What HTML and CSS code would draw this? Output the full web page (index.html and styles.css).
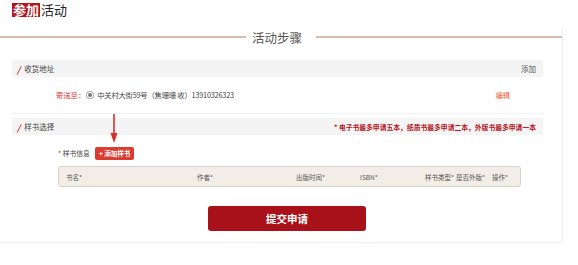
FILE: index.html
```html
<!DOCTYPE html>
<html lang="zh-CN">
<head>
    <meta charset="UTF-8">
    <title>参加活动</title>
    <link rel="stylesheet" href="styles.css">
</head>
<body>
    <div class="top">
        <span class="tag">参加</span><span class="top-text">活动</span>
    </div>

    <div class="panel">
        <div class="steps"><span>活动步骤</span></div>

        <!-- 收货地址 -->
        <div class="section">
            <div class="sec-head">
                <span class="slash">/</span>
                <span class="sec-title">收货地址</span>
                <span class="sec-right">添加</span>
            </div>
            <div class="address">
                <span class="addr-label">寄送至：</span>
                <span class="radio"></span>
                <span class="addr-text">中关村大街59号（焦珊珊 收）13910326323</span>
                <span class="edit">编辑</span>
            </div>
        </div>

        <!-- 样书选择 -->
        <div class="section books">
            <div class="sec-head">
                <span class="slash">/</span>
                <span class="sec-title">样书选择</span>
                <span class="sec-note">* 电子书最多申请五本，纸质书最多申请二本，外版书最多申请一本</span>
            </div>
            <div class="book-row">
                <span class="book-label">* 样书信息</span>
                <button class="add-btn">+ 添加样书</button>
            </div>
            <div class="table-head">
                <span class="c-name">书名*</span>
                <span class="c-author">作者*</span>
                <span class="c-date">出版时间*</span>
                <span class="c-isbn">ISBN*</span>
                <span class="c-type">样书类型*</span>
                <span class="c-foreign">是否外版*</span>
                <span class="c-op">操作*</span>
            </div>
            <svg class="arrow" width="10" height="30" viewBox="0 0 10 30">
                <line x1="5" y1="0" x2="5" y2="22" stroke="#d8312b" stroke-width="1.6"/>
                <polygon points="1.5,19 8.5,19 5,29" fill="#d8312b"/>
            </svg>
        </div>

        <div class="submit-row">
            <button class="submit">提交申请</button>
        </div>
    </div>
</body>
</html>
```

FILE: styles.css
```css
body {
    margin: 0;
    font-family: "Noto Sans CJK SC", "Noto Sans", sans-serif;
    color: #333;
    background: #fff;
}

.top {
    height: 28px;
    padding: 3px 0 0 12px;
    box-sizing: border-box;
    display: flex;
    align-items: flex-start;
}

.tag {
    background: #b5141c;
    color: #fff;
    font-size: 13px;
    line-height: 14px;
    padding: 0 1px;
    font-weight: bold;
}

.top-text {
    font-size: 13px;
    line-height: 14px;
    color: #222;
    margin-left: 1px;
}

.panel {
    width: 562px;
    height: 214px;
    border-right: 1px solid #eee;
    border-bottom: 1px solid #eee;
    box-shadow: 0 1px 2px rgba(0, 0, 0, 0.04);
}

/* title on the line */
.steps {
    display: flex;
    align-items: center;
    height: 18px;
}

.steps::before,
.steps::after {
    content: "";
    flex: 1;
    height: 2px;
    background: #d4bea9;
}

.steps span {
    padding: 0 14px;
    font-size: 12.5px;
    color: #555;
    margin-left: -8px;
}

.section {
    margin: 14px 19px 0 12px;
    position: relative;
}

.books {
    margin-top: 4px;
}

.sec-head {
    height: 17px;
    background: #f4f4f4;
    display: flex;
    align-items: center;
    padding: 0 7px 0 5px;
    font-size: 7.5px;
    color: #444;
}

.slash {
    color: #c1121c;
    font-weight: bold;
    font-style: italic;
    font-size: 8.5px;
    margin-right: 4px;
}

.sec-right {
    margin-left: auto;
    color: #555;
}

.sec-note {
    margin-left: auto;
    color: #b4151e;
    font-weight: bold;
    font-size: 6.8px;
}

.address {
    height: 36px;
    display: flex;
    align-items: center;
    padding-left: 44px;
    font-size: 7.3px;
    color: #444;
    border-bottom: 1px solid #f1f1f1;
}

.addr-label {
    color: #e4393c;
}

.radio {
    width: 4px;
    height: 4px;
    border-radius: 50%;
    background: #777;
    box-shadow: 0 0 0 1px #fff, 0 0 0 2px #aaa;
    margin: 0 5px 0 3px;
}

.addr-text {
    letter-spacing: -0.2px;
}

.edit {
    margin-left: auto;
    margin-right: 33px;
    color: #e8632d;
}

.book-row {
    display: flex;
    align-items: center;
    height: 14px;
    margin-top: 11px;
    padding-left: 46px;
    font-size: 6.8px;
    color: #444;
}

.add-btn {
    margin-left: 5px;
    height: 13px;
    padding: 0 4px;
    border: none;
    border-radius: 2px;
    background: #dc3b31;
    color: #fff;
    font-family: inherit;
    font-size: 6.5px;
    font-weight: bold;
    white-space: nowrap;
}

.table-head {
    margin: 6px 22px 0 46px;
    height: 21px;
    box-sizing: border-box;
    background: #f3ede7;
    border: 1px solid #dccfc3;
    border-radius: 3px;
    display: flex;
    align-items: center;
    font-size: 6.5px;
    color: #555;
    white-space: nowrap;
}

.table-head span {
    flex: none;
}

.c-name { margin-left: 7px; width: 131px; }
.c-author { width: 99px; }
.c-date { width: 64px; }
.c-isbn { width: 65px; }
.c-type { width: 31px; }
.c-foreign { width: 36px; }

.arrow {
    position: absolute;
    left: 97px;
    top: -4px;
}

.submit-row {
    display: flex;
    justify-content: center;
    padding-left: 12px;
    margin-top: 19px;
}

.submit {
    width: 158px;
    height: 25px;
    border: none;
    border-radius: 3px;
    background: #a8111a;
    color: #fff;
    font-family: inherit;
    font-size: 10.5px;
    font-weight: bold;
}
```
